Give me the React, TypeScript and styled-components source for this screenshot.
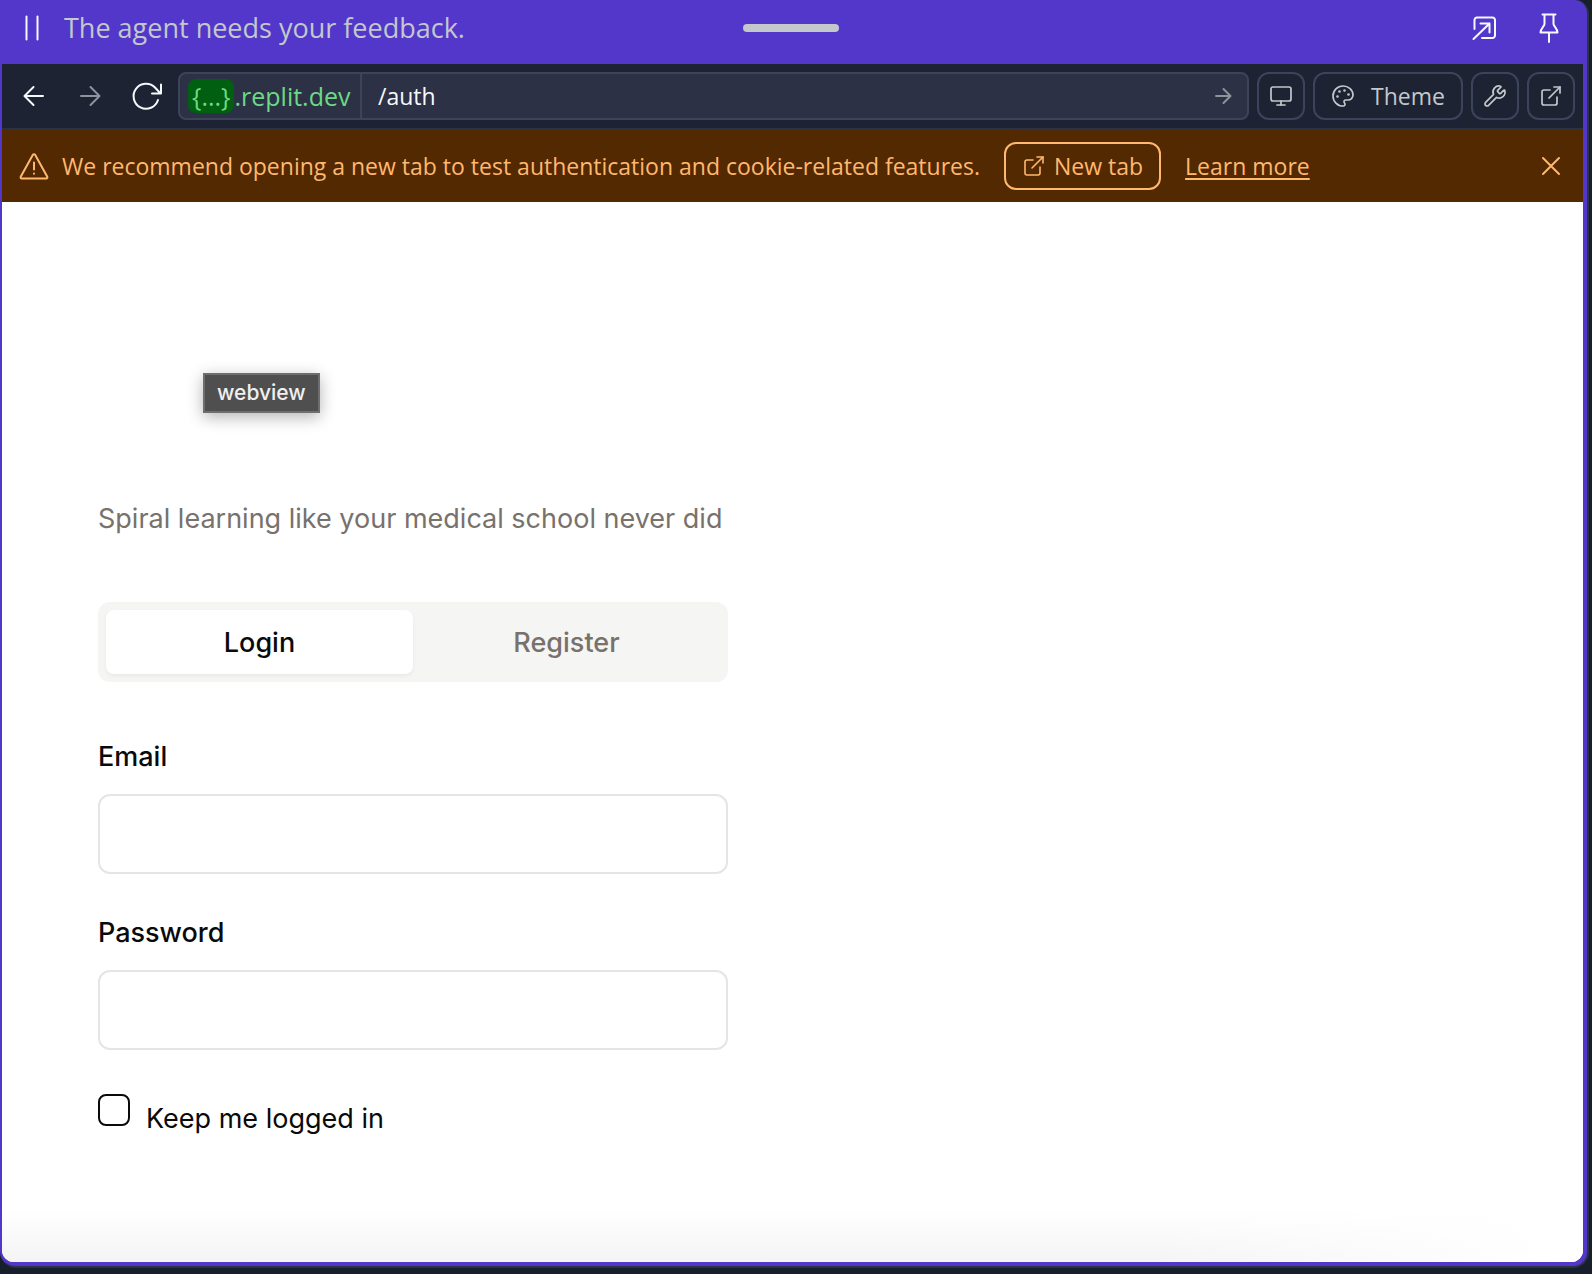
import React, { useState } from "react";
import styled, { createGlobalStyle, ThemeProvider } from "styled-components";
import { ExternalLink, Monitor, Palette, Wrench } from "lucide-react";

const theme = {
  root: "#171e2c",
  bar: "#1d2333",
  field: "#2c3145",
  outline: "#3c445c",
  edge: "#2b3245",
  purple: "#5237ca",
  text: "#f5f9fc",
  dim: "#c2c8cc",
  faint: "#8f939c",
  warnBg: "#522900",
  warn: "#ffb86f",
  hostBg: "#005f10",
  host: "#6cd985",
  muted: "#78716c",
  ink: "#0a0a0a",
  tabs: "#f5f5f4",
  line: "#e5e5e5",
  chrome: `"Open Sans", "Noto Sans", sans-serif`,
  page: `Inter, "Liberation Sans", sans-serif`,
};

const GlobalStyle = createGlobalStyle`
  *, *::before, *::after { box-sizing: border-box; }
  body { margin: 0; background: ${theme.root}; }
  button, input { font: inherit; margin: 0; }
`;

const Screen = styled.div`
  display: flex;
  min-height: 100vh;
  padding: 0 3px 6px 0;
  background: ${(p) => p.theme.root};
`;

const Pane = styled.section`
  flex: 1;
  min-width: 0;
  display: flex;
  flex-direction: column;
  padding: 0 4px 4px 2px;
  background: ${(p) => p.theme.purple};
  border: solid ${(p) => p.theme.edge};
  border-width: 0 2px 2px 0;
  border-radius: 0 14px 16px 16px;
  font-family: ${(p) => p.theme.chrome};
  font-weight: 500;
  font-size: 23px;
  line-height: 32px;
`;

const TitleBar = styled.header`
  display: grid;
  grid-template-columns: 1fr auto 1fr;
  align-items: center;
  height: 64px;
  padding: 0 18px 8px 14px;
`;

const Status = styled.div`
  display: flex;
  align-items: center;
  gap: 16px;
  color: ${(p) => p.theme.dim};
  font-size: 27px;
`;

const Handle = styled.div`
  width: 96px;
  height: 8px;
  border-radius: 4px;
  background: ${(p) => p.theme.dim};
`;

const TitleActions = styled.div`
  display: flex;
  justify-content: flex-end;
  gap: 32px;
`;

const IconButton = styled.button<{ $color?: string }>`
  display: flex;
  flex: none;
  padding: 0;
  border: 0;
  background: none;
  color: ${(p) => p.$color || p.theme.text};
`;

const Webview = styled.div`
  flex: 1;
  display: flex;
  flex-direction: column;
  overflow: hidden;
  background: #fff;
  border-radius: 0 0 12px 12px;
`;

const Toolbar = styled.nav`
  display: flex;
  align-items: center;
  gap: 8px;
  height: 66px;
  padding: 0 8px 0 16px;
  background: ${(p) => p.theme.bar};
  border-bottom: 2px solid ${(p) => p.theme.edge};
`;

const History = styled.div`
  display: flex;
  gap: 24px;
  margin-right: 8px;
`;

const Address = styled.form`
  flex: 1;
  min-width: 0;
  display: flex;
  align-items: center;
  height: 48px;
  padding-right: 12px;
  background: ${(p) => p.theme.field};
  border: 2px solid ${(p) => p.theme.outline};
  border-radius: 8px;
`;

const Host = styled.label`
  flex: none;
  display: flex;
  align-items: center;
  align-self: stretch;
  min-width: 182px;
  padding: 0 8px;
  border-right: 2px solid ${(p) => p.theme.outline};
  color: ${(p) => p.theme.host};
  font-size: 25px;
`;

const HostChip = styled.span`
  padding: 1px 4px;
  border-radius: 8px;
  background: ${(p) => p.theme.hostBg};
`;

const PathInput = styled.input`
  flex: 1;
  min-width: 0;
  padding: 0 16px;
  border: 0;
  outline: 0;
  background: none;
  color: ${(p) => p.theme.text};
`;

const ToolButton = styled.button`
  flex: none;
  display: flex;
  align-items: center;
  justify-content: center;
  gap: 16px;
  min-width: 48px;
  height: 48px;
  padding: 0 10px;
  background: none;
  border: 2px solid ${(p) => p.theme.outline};
  border-radius: 12px;
  color: ${(p) => p.theme.dim};
`;

const ToolLabel = styled.span`
  padding-right: 6px;
`;

const ThemeButton = styled(ToolButton)`
  padding-left: 16px;
`;

const Banner = styled.aside`
  display: flex;
  align-items: center;
  gap: 24px;
  height: 72px;
  padding: 0 20px 0 16px;
  background: ${(p) => p.theme.warnBg};
  color: ${(p) => p.theme.warn};
`;

const Notice = styled.p`
  display: flex;
  align-items: center;
  gap: 12px;
  margin: 0;
`;

const NewTab = styled.button`
  display: flex;
  align-items: center;
  gap: 8px;
  height: 48px;
  padding: 0 16px;
  background: none;
  border: 2px solid currentColor;
  border-radius: 12px;
  color: inherit;
`;

const MoreLink = styled.a`
  flex: 1;
  color: inherit;
  text-decoration-thickness: 2px;
  text-underline-offset: 3px;
`;

const Page = styled.main`
  position: relative;
  flex: 1;
  padding: 296px 96px 96px;
  color: ${(p) => p.theme.ink};
  background: linear-gradient(100deg, transparent 75%, #fff 98%), linear-gradient(to top, #f4f4f4, #fff 52px);
  font-family: ${(p) => p.theme.page};
  font-size: 27px;
  line-height: 30px;
  font-weight: 400;
`;

const Tooltip = styled.div`
  position: absolute;
  top: 171px;
  left: 201px;
  padding: 3px 12px;
  background: #4f4f4f;
  border: 2px solid #6e6e6e;
  box-shadow: 0 4px 16px rgba(0, 0, 0, 0.3);
  color: #f0f0f0;
  font-size: 21px;
  font-weight: 500;
`;

const Column = styled.div`
  max-width: 630px;
`;

const Tagline = styled.p`
  margin: 0 0 62px;
  line-height: 42px;
  color: ${(p) => p.theme.muted};
`;

const Tabs = styled.div`
  display: grid;
  grid-template-columns: 1fr 1fr;
  height: 80px;
  margin-bottom: 60px;
  padding: 8px;
  border-radius: 12px;
  background: ${(p) => p.theme.tabs};
`;

const Tab = styled.button<{ $active: boolean }>`
  padding: 2px 0 0;
  border: 0;
  border-radius: 8px;
  font-weight: 500;
  background: ${(p) => (p.$active ? "#fff" : "none")};
  color: ${(p) => (p.$active ? p.theme.ink : p.theme.muted)};
  box-shadow: ${(p) => (p.$active ? "0 2px 4px rgba(0, 0, 0, 0.05)" : "none")};
`;

const Form = styled.form`
  display: flex;
  flex-direction: column;
  gap: 44px;
`;

const Field = styled.div`
  display: flex;
  flex-direction: column;
  gap: 22px;
`;

const Label = styled.label`
  font-weight: 500;
`;

const TextInput = styled.input`
  height: 80px;
  padding: 0 24px;
  background: #fff;
  border: 2px solid ${(p) => p.theme.line};
  border-radius: 12px;
`;

const Remember = styled.div`
  display: flex;
  align-items: flex-start;
  gap: 16px;
  line-height: 50px;
`;

const Checkbox = styled.input`
  appearance: none;
  width: 32px;
  height: 32px;
  border: 2px solid ${(p) => p.theme.ink};
  border-radius: 8px;
  background: #fff;
  &:checked { background: ${(p) => p.theme.ink}; }
`;

const Glyph = ({ d, size = 32, width = 2 }: { d: string; size?: number; width?: number }) => (
  <svg width={size} height={size} viewBox={`0 0 ${size} ${size}`} fill="none" stroke="currentColor" strokeWidth={width} strokeLinecap="round" strokeLinejoin="round" aria-hidden="true">
    <path d={d} />
  </svg>
);

const glyphs = {
  pause: "M10.5 4.5v23M21.5 4.5v23",
  popOut: "M5.5 17V8a2.5 2.500 0 0 1 2.500-2.500h15.500a2.500 2.500 0 0 1 2.500 2.500v15.500a2.500 2.500 0 0 1-2.500 2.500H13M4.500 27L20.500 11.500M11.500 11.500h9v9",
  pin: "M9.500 2.500h13M11.500 2.500v9.500c0 2-4 4.500-4 8.500h17c0-4-4-6.500-4-8.500v-9.500M16 20.500V30",
  back: "M25 16H7M15.500 7l-9 9 9 9",
  forward: "M7 16h18M16.500 7l9 9-9 9",
  reload: "M28 20A12.500 12.500 0 1 1 25 7.500l5.500 6M31 4.500v9h-9",
  go: "M5 12h14M12.500 5l7 7-7 7",
  warning: "M14.900 4.800 2.700 26.800a1.200 1.200 0 0 0 1 1.700h24.600a1.200 1.200 0 0 0 1-1.700L17.100 4.800a1.250 1.250 0 0 0-2.200 0zM16 12.500v7M16 23.500v.2",
  close: "M4 4l16 16M20 4L4 20",
};

export default function App() {
  const [tab, setTab] = useState("Login");
  return (
    <ThemeProvider theme={theme}>
      <GlobalStyle />
      <Screen>
        <Pane>
          <TitleBar>
            <Status>
              <IconButton aria-label="Pause"><Glyph d={glyphs.pause} /></IconButton>
              The agent needs your feedback.
            </Status>
            <Handle />
            <TitleActions>
              <IconButton aria-label="Pop out"><Glyph d={glyphs.popOut} /></IconButton>
              <IconButton aria-label="Pin"><Glyph d={glyphs.pin} /></IconButton>
            </TitleActions>
          </TitleBar>
          <Webview>
            <Toolbar>
              <History>
                <IconButton aria-label="Back"><Glyph d={glyphs.back} /></IconButton>
                <IconButton aria-label="Forward" $color={theme.faint}><Glyph d={glyphs.forward} /></IconButton>
                <IconButton aria-label="Reload"><Glyph d={glyphs.reload} /></IconButton>
              </History>
              <Address onSubmit={(e) => e.preventDefault()}>
                <Host htmlFor="path"><HostChip>{"{...}"}</HostChip>.replit.dev</Host>
                <PathInput id="path" defaultValue="/auth" />
                <IconButton aria-label="Go" $color={theme.faint}><Glyph d={glyphs.go} size={24} /></IconButton>
              </Address>
              <ToolButton aria-label="Device size"><Monitor size={24} strokeWidth={1.7} /></ToolButton>
              <ThemeButton>
                <Palette size={24} strokeWidth={1.7} />
                <ToolLabel>Theme</ToolLabel>
              </ThemeButton>
              <ToolButton aria-label="Developer tools"><Wrench size={24} strokeWidth={1.7} /></ToolButton>
              <ToolButton aria-label="Open in new tab"><ExternalLink size={24} strokeWidth={1.7} /></ToolButton>
            </Toolbar>
            <Banner>
              <Notice>
                <Glyph d={glyphs.warning} />
                We recommend opening a new tab to test authentication and cookie-related features.
              </Notice>
              <NewTab><ExternalLink size={24} strokeWidth={1.6} />New tab</NewTab>
              <MoreLink href="#learn-more">Learn more</MoreLink>
              <IconButton aria-label="Dismiss" $color={theme.warn}><Glyph d={glyphs.close} size={24} /></IconButton>
            </Banner>
            <Page>
              <Tooltip role="tooltip">webview</Tooltip>
              <Column>
                <Tagline>Spiral learning like your medical school never did</Tagline>
                <Tabs role="tablist">
                  {["Login", "Register"].map((name) => (
                    <Tab key={name} role="tab" aria-selected={tab === name} $active={tab === name} onClick={() => setTab(name)}>
                      {name}
                    </Tab>
                  ))}
                </Tabs>
                <Form onSubmit={(e) => e.preventDefault()}>
                  <Field>
                    <Label htmlFor="email">Email</Label>
                    <TextInput id="email" type="email" />
                  </Field>
                  <Field>
                    <Label htmlFor="password">Password</Label>
                    <TextInput id="password" type="password" />
                  </Field>
                  <Remember>
                    <Checkbox id="remember" type="checkbox" />
                    <label htmlFor="remember">Keep me logged in</label>
                  </Remember>
                </Form>
              </Column>
            </Page>
          </Webview>
        </Pane>
      </Screen>
    </ThemeProvider>
  );
}
